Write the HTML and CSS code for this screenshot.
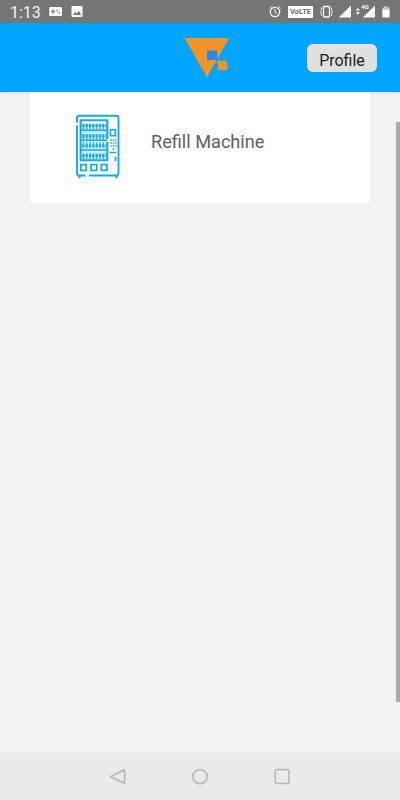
FILE: index.html
```
<!DOCTYPE html>
<html lang="en">
<head>
<meta charset="utf-8">
<title>Refill Machine</title>
<link rel="stylesheet" href="styles.css">
</head>
<body>
<div class="screen">
  <div class="status">
    <span class="clock">1:13</span>
    <svg class="status-left" width="30" height="23" viewBox="50 0 30 23">
      <rect x="49.200" y="7" width="12.800" height="9" rx="1" fill="#fff"/>
      <path d="M51 11.500h4M53 9.500v4" stroke="#757575" stroke-width="1.200"/>
      <path d="M56.500 10.200l1.200 1M58.700 12.200l1.200 1" stroke="#757575" stroke-width="1.400"/>
      <rect x="71.500" y="6" width="11" height="11" rx="1" fill="#fff"/>
      <path d="M73 15l2-3 1.700 1.800 2.200-3L81.200 15z" fill="#757575"/>
    </svg>
    <div class="status-right">
      <svg width="20" height="23" viewBox="268 0 20 23" fill="none" stroke="#fff">
        <circle cx="275" cy="12" r="4.700" stroke-width="1.300"/>
        <path d="M275 9v3.300l2.300 1.500M269.300 8.400l3-2.400M280.700 8.400l-3-2.400"/>
      </svg>
      <span class="volte">V<i>o</i>LTE</span>
      <svg width="78" height="23" viewBox="316 0 78 23" fill="none" stroke="#fff">
        <rect x="323.500" y="6.500" width="6" height="10.500" rx=".8" stroke-width="1.300"/>
        <path d="M321.500 7.500v2l-1 1 1 1.200-1 1.200 1 1v2M331.500 7.500v2l1 1-1 1.200 1 1.200-1 1v2"/>
        <path d="M351 5.500V17.500H338.700zM375 5.500V17.500H362.700z" fill="#fff" stroke="none"/>
        <path d="M360 10.600h-4.400l2.200-2.600zM360 12.200h-4.400l2.200 2.600z" fill="#fff" stroke="none"/>
        <rect x="361" y="4" width="8.800" height="6" fill="#757575" stroke="none"/>
        <text class="network" x="361.300" y="9.300">4G</text>
        <path d="M384 6.300h3.600v1.200h2v2.200h-7.200V7.500H384z" fill="#c4c4c4" stroke="none"/>
        <path d="M382.400 9.500h7.200v8h-7.200z" fill="#fff" stroke="none"/>
      </svg>
    </div>
  </div>
  <header class="header">
    <svg class="logo" width="46" height="42" viewBox="184 37 46 42">
      <path d="M184.500 38H229.300L207 77.200z" fill="#f29427"/>
      <rect x="207" y="50.500" width="10.300" height="9.500" fill="#2b87e8"/>
      <rect x="217" y="60" width="11.500" height="11" fill="#1c9af0"/>
      <rect x="217.700" y="60.700" width="9.600" height="9.300" fill="#f29427"/>
    </svg>
    <button class="profile">Profile</button>
  </header>
  <main class="content">
    <div class="card">
      <svg class="machine" width="46" height="66" viewBox="75 114 46 66" fill="none" stroke="#18a9dc">
        <path d="M77 122.500V118q0-2.200 2.200-2.200H116.300q2.200 0 2.200 2.200V173.300q0 2.200-2.200 2.200H89M85.500 175.500H79.200q-2.200 0-2.200-2.200V125.500" stroke-width="1.900"/>
        <path d="M79.500 176v2.300M116.500 176v2.300" stroke-width="2.200"/>
        <path d="M81 125h26v35h-26z" fill="#c5ecf8" stroke="none"/>
        <path d="M107.400 139V120.300H80.600V160.200H107.400V142" stroke-width="2"/>
        <path d="M81 130.300H107M81 140.300H107M81 150H107" stroke-width="1.500"/>
        <path d="M82.300 125.300H106.500M82.300 135.800H106.500M82.300 145.800H106.500M82.300 155.400H106.500" stroke-width="3.200" stroke-dasharray="2.300 1"/>
        <path d="M83 128H106.500M83 138.200H106.500M83 143.500H106.500M83 157.700H106.500" stroke-width="2.400" stroke-dasharray="1.100 2.200"/>
        <rect x="110.400" y="129.700" width="5" height="6" stroke-width="1.600"/>
        <path d="M110.500 140h6M110.500 143h6M110.500 146h6" stroke-width="1.500" stroke-dasharray="1.400 .9"/>
        <path d="M112.500 149h1.500M110 152.600h6.300" stroke-width="1.500"/>
        <path d="M115.400 157v4" stroke-width="1.700"/>
        <path d="M80.800 164.600h5.500v5.700h-5.500zM91 164.600h5.700v5.700H91zM101.300 164.600h5.700v5.700h-5.700z" stroke-width="1.700"/>
      </svg>
      <span class="card-title">Refill Machine</span>
    </div>
    <div class="scrollbar"></div>
  </main>
  <nav class="nav">
    <svg width="20" height="20" viewBox="0 0 20 20"><path d="M3.300 9.200L15.900 2.900Q16.600 2.700 16.600 3.500V15.500Q16.600 16.300 15.900 16L3.300 10.200Q2.500 9.700 3.300 9.200z"/></svg>
    <svg width="20" height="20" viewBox="0 0 20 20"><circle cx="10" cy="9.600" r="7.100"/></svg>
    <svg width="20" height="20" viewBox="0 0 20 20"><rect x="3.200" y="2.700" width="13.800" height="13.800" rx="1.500"/></svg>
  </nav>
</div>
</body>
</html>
```
FILE: styles.css
```
* { box-sizing: border-box; }
body { margin: 0; font-family: Roboto, sans-serif; }
svg { display: block; overflow: visible; flex: none; }
.screen {
  width: 400px;
  height: 800px;
  display: flex;
  flex-direction: column;
  background: #f2f2f2;
  overflow: hidden;
}
.status {
  height: 23px;
  flex: none;
  display: flex;
  align-items: center;
  background: #757575;
  color: #f4f4f4;
  padding: 0 6px 0 10px;
}
.clock { width: 40px; font-size: 16px; line-height: 23px; padding-top: 2px; }
.status-right { margin-left: auto; display: flex; align-items: center; }
.volte {
  width: 25px;
  height: 12px;
  margin: 1px 3px 0 0;
  background: #fff;
  color: #6a6a6a;
  font-size: 7.5px;
  font-weight: 700;
  line-height: 12px;
  text-align: center;
}
.network { font-size: 6px; font-weight: 700; fill: #fff; stroke: none; }
.header {
  height: 69px;
  flex: none;
  display: flex;
  align-items: flex-start;
  justify-content: space-between;
  background: #00a5ff;
  padding: 14px 23px 0 184px;
  box-shadow: 0 1px 2px rgba(0, 0, 0, .08);
}
.profile {
  width: 70px;
  height: 28px;
  margin-top: 7px;
  padding: 5px 0 0;
  border: 0;
  border-radius: 6px;
  background: #e0e0e0;
  color: #1c1c1c;
  font-family: inherit;
  font-size: 16px;
  line-height: 23px;
}
.content {
  flex: 1;
  display: flex;
  justify-content: space-between;
  align-items: flex-start;
  padding-left: 30px;
}
.card {
  width: 340px;
  height: 111px;
  display: flex;
  align-items: flex-start;
  padding: 22px 0 0 45px;
  background: #fff;
  border-radius: 0 0 4px 4px;
}
.card-title {
  margin: 16px 0 0 30px;
  color: #606060;
  font-size: 18.15px;
  line-height: 24px;
}
.scrollbar { width: 4px; height: 580px; margin-top: 30px; background: #aaa; }
.nav {
  height: 47px;
  flex: none;
  display: flex;
  justify-content: center;
  align-items: center;
  gap: 62px;
  background: #eaeaea;
}
.nav svg { fill: none; stroke: #b9b9b9; stroke-width: 1.700; }
```
